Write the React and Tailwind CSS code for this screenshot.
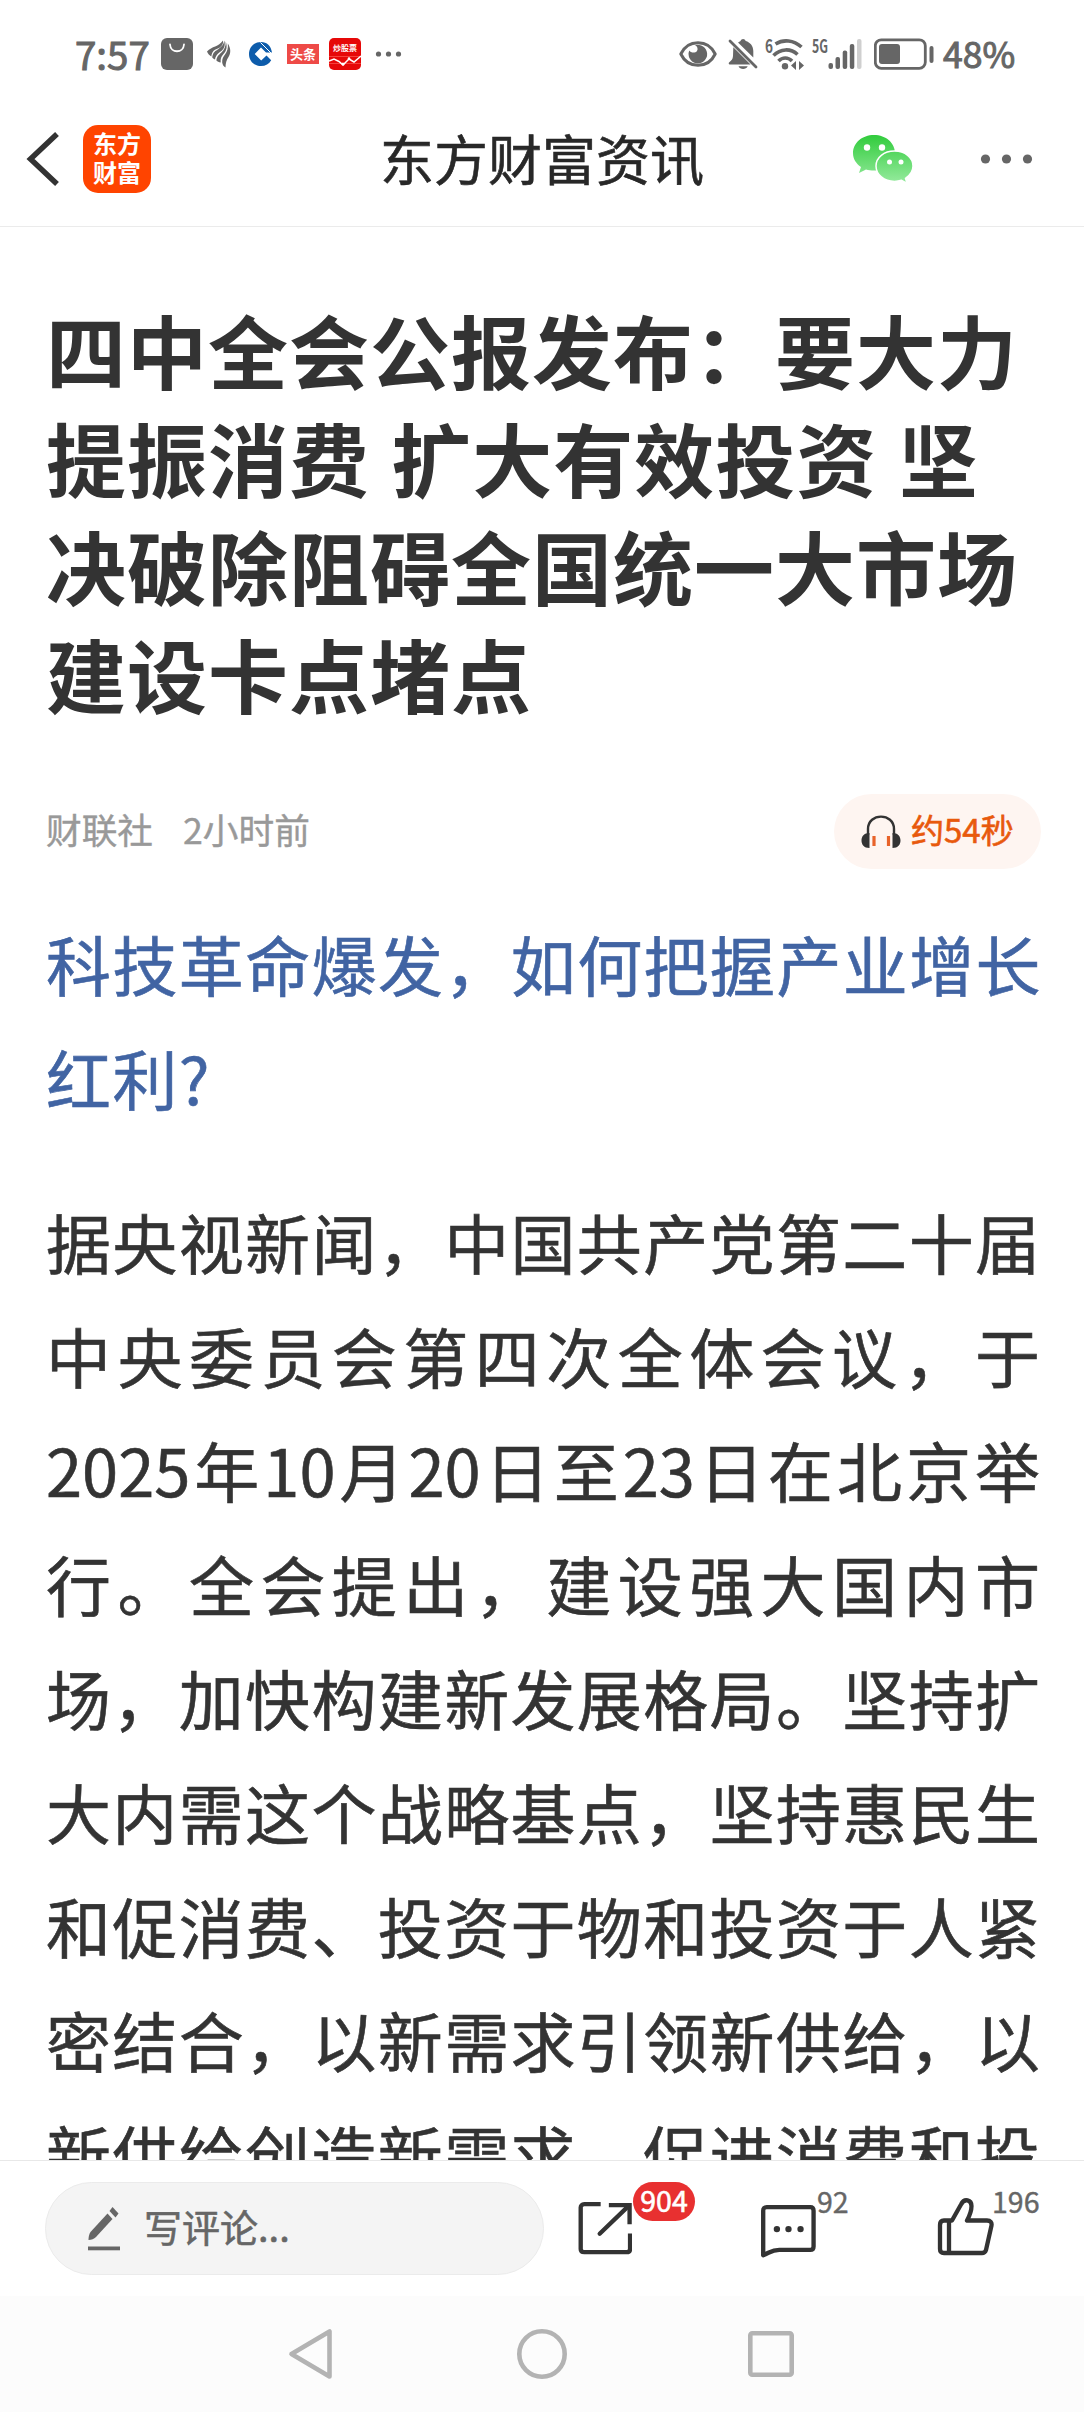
const paragraph = [
  "据央视新闻，中国共产党第二十届",
  "中央委员会第四次全体会议，于",
  "2025年10月20日至23日在北京举",
  "行。全会提出，建设强大国内市",
  "场，加快构建新发展格局。坚持扩",
  "大内需这个战略基点，坚持惠民生",
  "和促消费、投资于物和投资于人紧",
  "密结合，以新需求引领新供给，以",
  "新供给创造新需求，促进消费和投",
];

const StatusBar = () => (
  <div className="flex h-[108px] shrink-0 items-start justify-between pl-[75px] pr-[69px] pt-[34px] text-[#666666]">
    <div className="flex h-10 items-center">
      <span className="w-[86px] pb-[3px] text-[38.5px] leading-10 [-webkit-text-stroke:1px_#666]">7:57</span>
      {/* shopping bag */}
      <svg className="h-8 w-8" viewBox="0 0 32 32">
        <rect width="32" height="32" rx="6" fill="#666" />
        <path d="M9 6.5c.6 9 13.400 9 14 0" fill="none" stroke="#fff" strokeWidth="1.8" strokeLinecap="round" />
      </svg>
      {/* feather */}
      <svg className="ml-[14px] h-7 w-6" viewBox="0 0 24 28" fill="#666">
        <path d="M0 11.500C5 6 11.500 7 16 .500c.8 5-3 7.500-8 9.300C6 10.500 4.700 13.500 4.300 16.500 2.500 15.500.8 13.500 0 11.500z" />
        <path d="M17.300 .500c1.500 6.500-1 9.300-5 12-2.500 2-4 4.200-4.300 7-1.500-.5-2.300-1.300-2.800-2.200C6 12 8.500 11 11.500 9 15 6.500 16.800 4 17.300.500z" />
        <path d="M18.800 1.500c1.800 6 .6 9.300-2.500 12.800-2 2.300-3 4.500-2.600 8.200-1.800-.2-3.300-1-4.300-2 .3-4 2.500-5.700 5-8C17.500 9.500 18.800 6.500 18.800 1.500z" />
        <path d="M20.800 3.500c3.200 5 3.200 9.500.7 13.500-2 3-3 6-3 10.500-2-1-3-3-3.300-5-.2-3.500 1-5.700 2.800-8C20.500 11 21.200 8 20.800 3.500z" />
      </svg>
      {/* bank */}
      <svg className="ml-[18px] h-[26px] w-6" viewBox="0 0 24 26">
        <path d="M12 1C5 1 0 6 0 13s5 12 12 12c4.500 0 8.200-2 10.200-5.800l-4.700-4.700-5.300 5L5.700 13 12 6.500l5 5 6 0C22 5 18 1 12 1z" fill="#0d5cab" />
        <path d="M11.500 1.500l10.500 10.500" stroke="#fff" strokeWidth="1" />
      </svg>
      <div className="ml-[14px] flex h-5 w-8 items-center justify-center bg-[#ee4a47] text-[13px] font-bold leading-5 text-white">头条</div>
      {/* stock app */}
      <div className="ml-[10px] flex h-8 w-8 flex-col items-center rounded-[5px] bg-[#e60808] text-white">
        <span className="whitespace-nowrap pt-[5px] text-[8px] font-bold leading-[10px]">炒股票</span>
        <svg className="mt-px h-[14px] w-8" viewBox="0 0 32 14" fill="none">
          <path d="M0 2.500h32M0 9.500h32" stroke="#ff6a60" strokeWidth=".6" />
          <path d="M0 7l5-2 5 2.500 4 3.500 6-6 5 3 7-6" stroke="#fff" strokeWidth="1.500" />
          <circle cx="14" cy="10" r="1.500" fill="#fff" />
          <circle cx="20" cy="4.500" r="1.300" fill="#fff" />
        </svg>
      </div>
      <svg className="ml-[14px] h-2 w-7" viewBox="0 0 28 8" fill="#666">
        <circle cx="3.500" cy="4" r="2.600" />
        <circle cx="13.500" cy="4" r="2.600" />
        <circle cx="23.500" cy="4" r="2.600" />
      </svg>
    </div>

    <div className="flex h-10 items-center">
      <svg className="h-7 w-[38px]" viewBox="0 0 38 28">
        <path d="M1.800 14C9-1 29-1 36.200 14 29 29 9 29 1.800 14z" fill="none" stroke="#666" strokeWidth="3" strokeLinejoin="round" />
        <path d="M16 5.300A9.300 9.300 0 1 1 10.300 10.500c1.500 2.500 6 2.800 7.700.500 1.300-2 .5-4.500-2-5.700z" fill="#666" />
      </svg>
      <svg className="ml-[11px] h-8 w-[31px]" viewBox="0 0 31 32" fill="#666">
        <path d="M10 4.500C11.500 3.600 12.300 3.300 12.500 3c.8-2.800 4.400-2.800 5.200 0 4.500 1.300 7.600 5 7.600 10v6.500z" />
        <path d="M5.300 9.200L22.500 26.500H1.500c-1-.2-1-1.500-.2-2.200 2-1.700 3.500-3 3.700-6.300z" />
        <path d="M10.500 28.200h9.200c-1.500 3.700-7.700 3.700-9.200 0z" />
        <path d="M2 3l26 26" stroke="#666" strokeWidth="2.800" strokeLinecap="round" />
      </svg>
      {/* wifi 6 */}
      <svg className="ml-[6px] h-8 w-10 overflow-visible" viewBox="0 0 40 32">
        <text x="0" y="15" fontSize="19" fontWeight="700" fill="#666" textLength="8" lengthAdjust="spacingAndGlyphs">6</text>
        <g fill="none" stroke="#666" strokeWidth="3.600">
          <path d="M10.500 6c8-5 18-4 26 3" />
          <path d="M8.500 17.500c7-7 17-7.500 24-1" />
          <path d="M13.500 23c4-4 9.500-4 13.500 0" />
        </g>
        <circle cx="20" cy="28.300" r="3.200" fill="#666" />
        <path d="M31 23v9l-5-4.500zM34 23v9l5-4.500z" fill="#666" />
      </svg>
      {/* cellular */}
      <svg className="ml-[7px] h-8 w-[50px] overflow-visible" viewBox="0 0 50 32" fill="#666">
        <text x="0" y="15" fontSize="18" fontWeight="700" textLength="16" lengthAdjust="spacingAndGlyphs">5G</text>
        <rect x="16.500" y="25" width="4.500" height="6" rx="2" />
        <rect x="23.500" y="19" width="4.500" height="12" rx="2" />
        <rect x="30.700" y="12.500" width="4.500" height="18.500" rx="2" />
        <rect x="37.800" y="6" width="4.500" height="25" rx="2" />
        <rect x="45" y="1" width="4.500" height="30" rx="2" fill="#cfcfcf" />
      </svg>
      <svg className="ml-[12px] h-8 w-[60px]" viewBox="0 0 60 32">
        <rect x="1.300" y="1.800" width="50" height="28.500" rx="6" fill="none" stroke="#666" strokeWidth="2.800" />
        <rect x="5" y="6" width="21" height="20" rx="3" fill="#666" />
        <rect x="55.500" y="8" width="4" height="17" rx="2" fill="#666" />
      </svg>
      <span className="ml-[9px] w-[72px] whitespace-nowrap pb-[3px] text-[35.5px] leading-10 [-webkit-text-stroke:1px_#666]">48%</span>
    </div>
  </div>
);

const Header = () => (
  <header className="grid h-[119px] shrink-0 grid-cols-[1fr_auto_1fr] border-b border-[#ebebeb] pb-[16px]">
    <div className="flex items-center pl-[26px]">
      <svg className="h-14 w-9" viewBox="0 0 36 56">
        <path d="M31 3L4.500 28 31 53" fill="none" stroke="#333" strokeWidth="5.500" />
      </svg>
      <div className="ml-[21px] flex h-[68px] w-[68px] items-center justify-center rounded-[15px] bg-[#ff4400] pb-1 text-center text-[24px] font-bold leading-[29px] text-white">
        东方<br />财富
      </div>
    </div>
    <h1 className="self-center pb-[2px] text-[54px] leading-[68px] text-[#282828] [-webkit-text-stroke:0.6px_#282828]">东方财富资讯</h1>
    <div className="flex items-center justify-end pr-[50px]">
      <svg className="h-[50px] w-[62px]" viewBox="0 0 62 50">
        <defs>
          <linearGradient id="wechat" gradientUnits="userSpaceOnUse" x1="0" y1="0" x2="0" y2="50">
            <stop offset="0" stopColor="#2fcb3a" />
            <stop offset="1" stopColor="#98eba0" />
          </linearGradient>
        </defs>
        <path d="M22 1C10 1 1 9 1 19c0 6 3 10.500 8 14l-2 6 7-3.500c2.500.7 5 1 8 1 12 0 21-7.500 21-17.500S34 1 22 1z" fill="url(#wechat)" />
        <path d="M42.500 17C32 17 24 23.500 24 32s8 15.500 18.500 15.500c2.500 0 5-.5 7-1.200l5.500 3-1.500-5c4.500-3 7.500-7 7.500-12.300C61 23.500 53 17 42.500 17z" fill="url(#wechat)" stroke="#fff" strokeWidth="1.500" />
        <g fill="#fff">
          <circle cx="15" cy="13.500" r="3.200" />
          <circle cx="30" cy="13.500" r="3.200" />
          <circle cx="37.500" cy="28" r="2.500" />
          <circle cx="49" cy="28" r="2.500" />
        </g>
      </svg>
      <svg className="ml-[66px] h-3 w-[54px]" viewBox="0 0 54 12" fill="#666">
        <circle cx="5.500" cy="6" r="4.600" />
        <circle cx="26.500" cy="6" r="4.600" />
        <circle cx="47.500" cy="6" r="4.600" />
      </svg>
    </div>
  </header>
);

const Article = () => (
  <main className="min-h-0 flex-1 overflow-hidden px-[46px] pt-[67px]">
    <h2 className="whitespace-nowrap text-[80px] font-bold leading-[108px] tracking-[1px] text-[#333333] [word-spacing:2px]">
      四中全会公报发布：要大力<br />
      提振消费 扩大有效投资 坚<br />
      决破除阻碍全国统一大市场<br />
      建设卡点堵点
    </h2>

    <div className="mr-[-3px] mt-[68px] flex h-[75px] items-center justify-between">
      <div className="flex gap-[30px] pb-[6px] text-[35.7px] leading-[50px] text-[#999999] [-webkit-text-stroke:0.4px_#999]">
        <span>财联社</span>
        <span>2小时前</span>
      </div>
      <div className="flex h-[75px] w-[207px] items-center rounded-full bg-[#fef5f1] pl-[27px]">
        <svg className="h-[34px] w-10" viewBox="0 0 40 34">
          <path d="M7 20v-6C7-2.500 33-2.500 33 14v6" fill="none" stroke="#333" strokeWidth="2.400" />
          <path d="M8.500 18C3 18 .5 21.500.5 25.500S3 33 8.500 33zM31.500 18c5.500 0 8 3.500 8 7.500S37 33 31.500 33z" fill="#333" />
          <path d="M13 21v10M27.500 21v10" stroke="#e8632a" strokeWidth="3.200" />
        </svg>
        <span className="ml-[10px] whitespace-nowrap pb-[6px] text-[33px] leading-[50px] text-[#e8590c] [-webkit-text-stroke:0.6px_#e8590c]">约54秒</span>
      </div>
    </div>

    <p className="mt-[37px] whitespace-nowrap text-[65px] leading-[114px] tracking-[1.4px] text-[#4164a3] [-webkit-text-stroke:0.6px_#4164a3]">
      科技革命爆发，如何把握产业增长<br />
      红利?
    </p>

    <div className="mt-[50px] text-[65px] leading-[114px] text-[#333333] [-webkit-text-stroke:0.6px_#333]">
      {paragraph.map((line) => (
        <p key={line} className="mr-[-2px] whitespace-nowrap [text-align-last:justify]">{line}</p>
      ))}
    </div>
  </main>
);

const BottomBar = () => (
  <div className="flex h-[136px] shrink-0 items-start border-t border-[#e8e8e8] bg-white pl-[45px] pt-[21px]">
    <div className="flex h-[93px] w-[499px] items-center rounded-full border border-[#ebebeb] bg-[#f4f4f4] pl-[42px] text-[#666666]">
      <svg className="h-[44px] w-8" viewBox="0 0 32 44" fill="#666">
        <path d="M19.500 6.500l5 5.500L8 30c-2 2-4.500 3-7.500 3C.5 30 1 27 2.500 25z" />
        <path d="M24.500 0l6 6.500-3 4L21.500 4z" />
        <path d="M0 39.500h32v3.800H0z" />
      </svg>
      <span className="ml-[24px] pb-[6px] text-[38px] leading-[50px] [-webkit-text-stroke:0.6px_#666]">写评论...</span>
    </div>

    <div className="flex pl-[34px] pt-[15px]">
      <div className="relative mt-[4px] h-[56px] w-[56px]">
        <svg className="h-[54px] w-[54px]" viewBox="0 0 56 56" fill="none" stroke="#333" strokeWidth="4.500">
          <path d="M24 4H7C4.500 4 3.300 5.500 3.300 7.500v43c0 2 1.200 3.300 3.700 3.300h44c2.300 0 3.500-1.300 3.500-3.300V34.500" transform="translate(-.5 -.7)" />
          <path d="M32 4.300h21.500V24" />
          <path d="M22.500 34L52.500 5" strokeLinecap="round" />
        </svg>
        <span className="absolute left-[55px] top-[-19px] flex h-[39px] w-[62px] items-center justify-center rounded-full bg-[#e83030] pb-[3px] text-[28.5px] leading-[36px] text-white [-webkit-text-stroke:0.6px_#fff]">904</span>
      </div>
      <div className="relative ml-[126px] mt-[7px] h-[56px] w-[57px]">
        <svg className="h-[55px] w-[56px]" viewBox="0 0 58 57" fill="none" stroke="#333" strokeWidth="4.500" strokeLinejoin="round">
          <path d="M3.300 53V7c0-2.500 1.200-3.700 3.700-3.700h45c2.300 0 3.500 1.200 3.500 3.700v37c0 2.300-1.200 3.500-3.500 3.500H20c-8 0-10 3-16.700 5.500z" />
          <g fill="#333" stroke="none">
            <circle cx="17.500" cy="26" r="3.300" />
            <circle cx="29.500" cy="26" r="3.300" />
            <circle cx="42" cy="26" r="3.300" />
          </g>
        </svg>
        <span className="absolute left-[57px] top-[-23px] text-[28.5px] leading-[40px] text-[#666666] [-webkit-text-stroke:0.4px_#666]">92</span>
      </div>
      <div className="relative ml-[120px] mt-[1px] h-[58px] w-[57px]">
        <svg className="h-[58px] w-[57px]" viewBox="0 0 57 58" fill="none" stroke="#333" strokeWidth="4.300" strokeLinejoin="round">
          <path d="M3 27c0-3 1.300-4.500 4-4.500h8L24 6.500c3.500-7 10.500-4.500 10.500 1.500 0 5.500-1.500 9-4.500 14.500h20c3.500 0 5 2 4.500 5L49 52c-.7 2-1.500 3-4 3H7c-2.700 0-4-1.500-4-4z" />
          <path d="M12 23v32" />
        </svg>
        <span className="absolute left-[55px] top-[-17px] text-[28.5px] leading-[40px] text-[#666666] [-webkit-text-stroke:0.4px_#666]">196</span>
      </div>
    </div>
  </div>
);

const NavBar = () => (
  <nav className="flex h-[116px] shrink-0 items-center bg-[#fcfcfc] pl-[288px]">
    <svg className="h-[52px] w-[46px]" viewBox="0 0 46 52" fill="none" stroke="#b3b3b3" strokeWidth="4.600" strokeLinejoin="round">
      <path d="M41.500 3.500v45L3.500 26z" />
    </svg>
    <svg className="ml-[182px] h-[52px] w-[52px]" viewBox="0 0 52 52" fill="none" stroke="#b3b3b3" strokeWidth="4.600">
      <circle cx="26" cy="26" r="22.700" />
    </svg>
    <svg className="ml-[180px] h-[46px] w-[46px]" viewBox="0 0 46 46" fill="none" stroke="#b3b3b3" strokeWidth="4.600">
      <rect x="2.300" y="2.300" width="41.400" height="41.400" rx="2" />
    </svg>
  </nav>
);

const App = () => {
  return (
    <div
      lang="zh-CN"
      className="flex h-[2412px] w-[1084px] flex-col overflow-hidden bg-white font-['Noto_Sans_CJK_SC',sans-serif]"
    >
      <StatusBar />
      <Header />
      <Article />
      <BottomBar />
      <NavBar />
    </div>
  );
};

export default App;
